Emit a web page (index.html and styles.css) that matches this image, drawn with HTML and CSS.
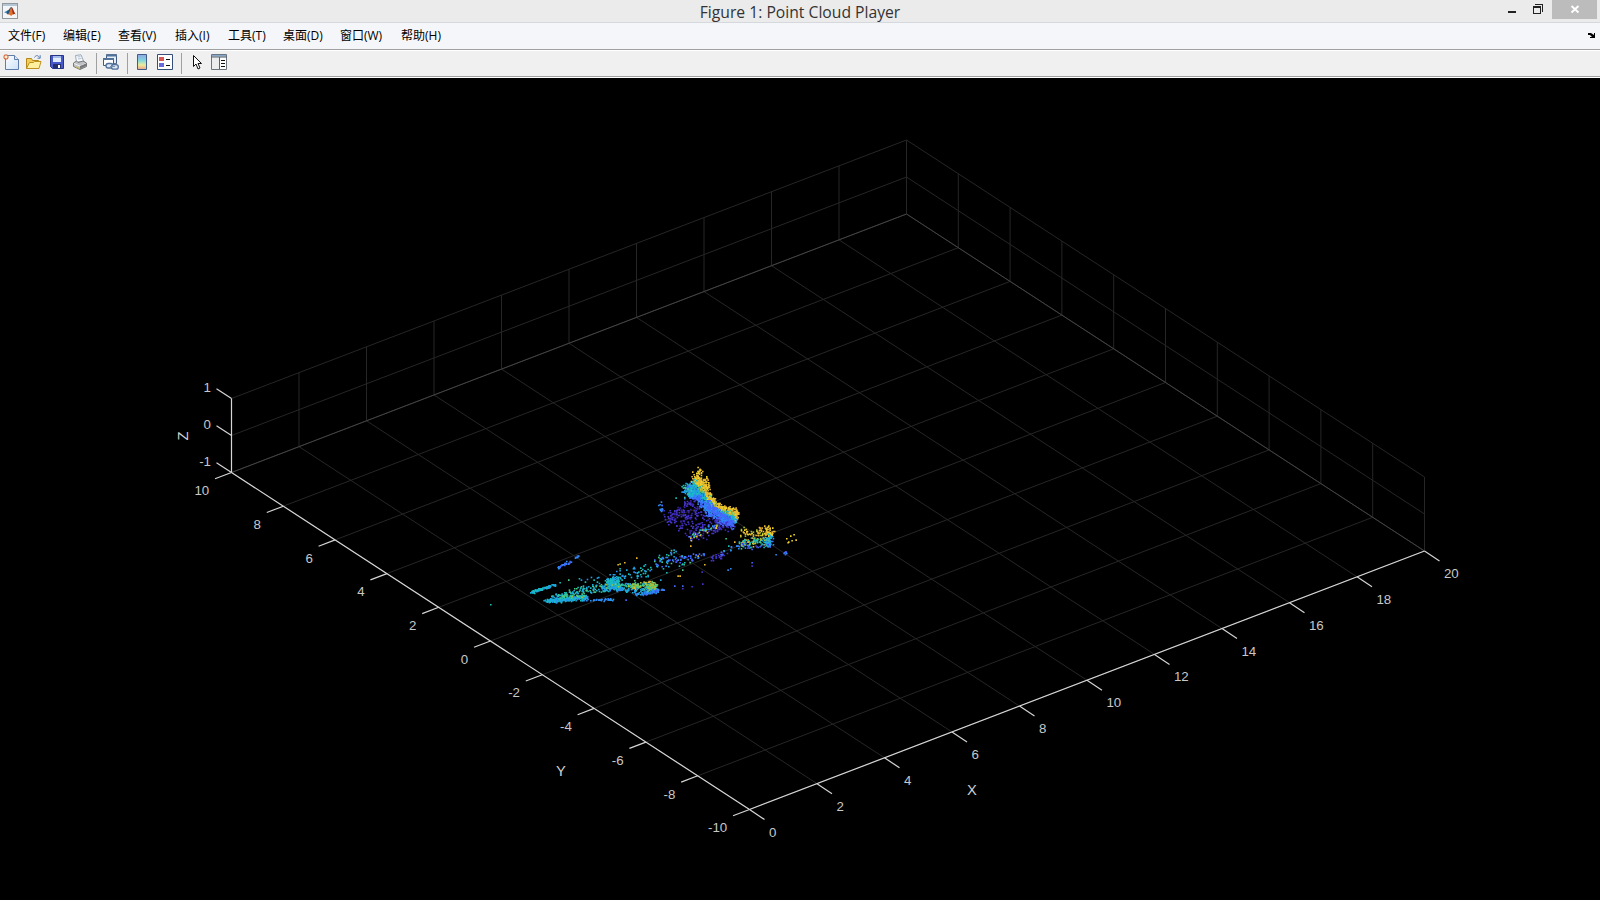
FILE: index.html
```html
<!DOCTYPE html>
<html lang="zh-CN">
<head>
<meta charset="utf-8">
<title>Figure 1: Point Cloud Player</title>
<link rel="stylesheet" href="styles.css">
</head>
<body>
<div class="window">
  <header class="titlebar">
    <svg class="app-icon" width="16" height="16" viewBox="0 0 16 16">
      <rect x=".5" y=".5" width="15" height="15" fill="#f4f5f7" stroke="#8f989f"/>
      <path d="M1 1h14v2H1z" fill="#b4c5d3"/>
      <path d="M2 9.200 5.500 7.500 8 9 6 11.500 4.500 10.300z" fill="#4288b8"/>
      <path d="M5.500 7.500C7.500 7 8 4 9.300 4L8.500 8 6 11.500 4.500 10z" fill="#28587d"/>
      <path d="M9.300 4c1.200 0 2.500 5 4.400 7.400-2-1-3.200 0-4.500 1.700C8.500 12 7.500 11.500 6 11.500 8 9.500 8.500 5 9.300 4z" fill="#e4702b"/>
      <path d="M9.300 4c1.200 0 2.500 5 4.400 7.400-1.500-.7-2.200-.5-2.800 0C10.500 9 9.800 6 9.300 4z" fill="#9b2f1d"/>
    </svg>
    <h1 class="title">Figure 1: Point Cloud Player</h1>
    <div class="controls">
      <svg class="control" width="9" height="19"><path d="M0 11h8v2H0z" fill="#222"/></svg>
      <svg class="control restore" width="11" height="19"><path d="M2 4h8v8H9V5H2z" fill="#222"/><path d="M0 6h8v8H0zM1 8v5h6V8z" fill="#222" fill-rule="evenodd"/></svg>
      <svg class="close" width="45" height="19"><path d="M19.500 6l7 6.500m0-6.500-7 6.500" stroke="#fff" stroke-width="1.900"/></svg>
    </div>
  </header>
  <nav class="menubar">
    <span>文件(F)</span><span>编辑(E)</span><span>查看(V)</span><span>插入(I)</span><span>工具(T)</span><span>桌面(D)</span><span>窗口(W)</span><span>帮助(H)</span>
    <svg class="dock" width="8" height="7"><path d="M0 1h3l3 2V1h1v5H2V5h2L2 3H0z" fill="#000"/></svg>
  </nav>
  <div class="toolbar">
    <svg class="tool" width="16" height="16" viewBox="0 0 16 16">
      <defs><linearGradient id="paper" x2="1" y2="1"><stop stop-color="#fff"/><stop offset="1" stop-color="#cbe2f8"/></linearGradient></defs>
      <path d="M2.500 1.500h9l4 4v10h-13z" fill="url(#paper)" stroke="#5f7da8"/><path d="M11.500 1.500v4h4" fill="#dceafa" stroke="#5f7da8"/>
      <path d="M3 0v6M0 3h6M1 1l4 4m0-4L1 5" stroke="#d9673f" stroke-width="1.100"/><circle cx="3" cy="3" r="1.400" fill="#fff0c8"/>
    </svg>
    <svg class="tool" width="16" height="16" viewBox="0 0 16 16">
      <path d="M.5 14.500v-10h5l1 2h6v8z" fill="#f4cf58" stroke="#b38717"/>
      <path d="M.5 14.500 3.500 8.500h4l1-1h6.500l-2 7z" fill="#fff0a0" stroke="#bd9120"/>
      <path d="M8.500 3.500c1.500-3 4-2 5 0m.7-2.300v3H11.500" fill="none" stroke="#557cae"/>
    </svg>
    <svg class="tool" width="16" height="16" viewBox="0 0 16 16">
      <path d="M1.500 1.500h13v13h-11l-2-2z" fill="#4859cc" stroke="#263483"/><path d="M4 2h8v6H4z" fill="#e1ecfb"/><path d="M4 2h8v2H4z" fill="#a5bbe9"/><path d="M4 10h8v4H4z" fill="#252f69"/><path d="M9 11h2v3H9z" fill="#fff"/>
    </svg>
    <svg class="tool" width="16" height="16" viewBox="0 0 16 16">
      <path d="M4.500 8 3.500 1.500 9 .8l3 7.200z" fill="#f8fbff" stroke="#9aa8b8"/><path d="m5.500 3 3-.4M6 5l3.500-.5" stroke="#b0bed0"/>
      <path d="m1.500 9 3-2 1.500 1.500 5-1.500 3.500 2v3.500L8 15.500l-6.500-3z" fill="#bfc2c4" stroke="#777"/><path d="m2 9.500 6 2.500 6-2.500" fill="none" stroke="#f0f0f0"/><path d="m8 15 6-3V9.500L8 12z" fill="#77797c"/><path d="m4 13 3.500 1.500" stroke="#c8b64a"/>
    </svg>
    <i class="separator"></i>
    <svg class="tool" width="16" height="16" viewBox="0 0 16 16">
      <path d="M3.500.7h10v9h-10z" fill="#e4edf6" stroke="#405b80"/><path d="M3 .5h11v2H3z" fill="#527399"/><path d="M.5 4.500h10v7H.5z" fill="#fff" stroke="#405b80"/><path d="M0 4h11v2H0z" fill="#527399"/>
      <g fill="#dae6f4" stroke="#51719b" stroke-width="1.300"><rect x="3" y="9.500" width="7" height="4.500" rx="2.200"/><rect x="8.500" y="10.700" width="6.800" height="4.500" rx="2.200"/></g><path d="M7 12.500h5" stroke="#7892b2"/>
    </svg>
    <i class="separator"></i>
    <svg class="tool colorbar" width="12" height="16" viewBox="0 0 12 16">
      <defs><linearGradient id="bar" x2="0" y2="1"><stop stop-color="#91a6e5"/><stop offset=".4" stop-color="#83d7dc"/><stop offset=".7" stop-color="#ecec9b"/><stop offset="1" stop-color="#ee9f88"/></linearGradient></defs>
      <path d="M1.500.5h9v15h-9z" fill="url(#bar)" stroke="#405d8a"/>
    </svg>
    <svg class="tool" width="16" height="16" viewBox="0 0 16 16">
      <path d="M.5.500h15v15H.5z" fill="#fff" stroke="#344f78"/><path d="M2 3h5v4H2z" fill="#d95757"/><path d="M2 9h5v4H2z" fill="#6868df"/><path d="M9 5.500h4M9 11.500h4" stroke="#111"/>
    </svg>
    <i class="separator"></i>
    <svg class="tool arrow" width="11" height="16" viewBox="0 0 11 16"><path d="M1.500 1.500v11l2.500-2.500L6 15l2-1-2-4.500h3.500z" fill="#fff" stroke="#111"/></svg>
    <svg class="tool" width="16" height="16" viewBox="0 0 16 16">
      <path d="M.5.500h15v15H.5z" fill="#ececec" stroke="#6c747d"/><path d="M1 1h14v1.500H1z" fill="#84a8cd"/><path d="M0 3h16M8.500 3v12" stroke="#59626d"/><path d="M9 4h6v11H9z" fill="#fff"/><path d="M10 6.500h4M10 9.500h4M10 12.500h4" stroke="#111"/>
    </svg>
  </div>
  <main class="figure"><svg id="plot" class="plot" width="1600" height="822" viewBox="0 78 1600 822"></svg></main>
</div>
<script src="plot.js"></script>
</body>
</html>
```
FILE: styles.css
```css
* { box-sizing: border-box; }
body { margin: 0; background: #000; overflow: hidden; }
.window { display: flex; flex-direction: column; width: 1600px; height: 900px; }
.titlebar { display: grid; grid-template-columns: 120px 1fr 120px; height: 23px; background: #ebebeb; border-bottom: 1px solid #d5d9dd; }
.app-icon { margin: 3px 0 0 2px; }
.title { margin: 0; font: 400 15.7px/24px "Open Sans", "Noto Sans", sans-serif; color: #333; text-align: center; white-space: nowrap; }
.controls { display: flex; justify-content: flex-end; padding-right: 3px; }
.control { flex: 0 0 auto; margin-right: 16px; }
.control.restore { margin-right: 8px; }
.close { flex: 0 0 45px; background: #bcbcbc; }
.menubar { display: grid; grid-template-columns: 55px 55px 57px 53px 55px 57px 61px 1fr 8px; height: 28px; padding: 0 4px 0 8px; background: #f4f6f9; border-bottom: 1px solid #fff; box-shadow: inset 0 -1px #a0a0a0; font: 12px/25px "Open Sans", "Noto Sans CJK SC", sans-serif; color: #000; white-space: nowrap; }
.dock { margin-top: 9px; }
.toolbar { display: flex; align-items: flex-start; height: 27px; padding: 3px 0 0 3px; background: #f0f0f0; border-bottom: 1px solid #fff; box-shadow: inset 0 -1px #a0a0a0; }
.tool { flex: 0 0 auto; margin-right: 7px; }
.separator { width: 1px; height: 21px; margin: -1px 6px 0 1px; background: #a0a0a0; }
.tool.colorbar { margin: 0 9px 0 2px; }
.tool.arrow { margin: 0 8px 0 4px; }
.figure { height: 822px; background: #000; }
.plot { display: block; }
.tick-label { font: 13.300px "Liberation Sans", Arial, sans-serif; fill: #c8c8c8; }
.axis-label { font: 14.700px "Liberation Sans", Arial, sans-serif; fill: #d0d0d0; text-anchor: middle; }
.end { text-anchor: end; }
.grid { stroke: #262626; stroke-width: 1; fill: none; }
.edge { stroke: #434343; stroke-width: 1; fill: none; }
.axis { stroke: #d6d6d6; stroke-width: 1.200; fill: none; }
```
FILE: plot.js
```js
const plot = document.getElementById('plot');
const NS = 'http://www.w3.org/2000/svg';
function add(tag, attrs, text) {
  const el = document.createElementNS(NS, tag);
  for (const k in attrs) el.setAttribute(k, attrs[k]);
  if (text !== undefined) el.textContent = text;
  plot.appendChild(el);
}
// Axonometric projection of data coordinates
function project(x, y, z) {
  return [231.5 + x * 33.75 + (10 - y) * 25.9, 472.5 - x * 12.925 + (10 - y) * 16.85 - (z + 1) * 37];
}
function line(a, b, cls) {
  add('path', { class: cls, d: 'M' + a.join(' ') + 'L' + b.join(' ') });
}
for (let i = 0; i <= 10; i++) {
  const x = i * 2, y = i * 2 - 10;
  line(project(x, -10, -1), project(x, 10, -1), 'grid');
  line(project(0, y, -1), project(20, y, -1), 'grid');
  if (i > 0) line(project(x, 10, -1), project(x, 10, 1), 'grid');
  line(project(20, y, -1), project(20, y, 1), 'grid');
}
for (const z of [0, 1]) {
  line(project(0, 10, z), project(20, 10, z), 'grid');
  line(project(20, 10, z), project(20, -10, z), 'grid');
}
line(project(0, 10, -1), project(20, 10, -1), 'edge');
line(project(20, 10, -1), project(20, -10, -1), 'edge');
line(project(0, 10, -1), project(0, -10, -1), 'axis');
line(project(0, -10, -1), project(20, -10, -1), 'axis');
line(project(0, 10, -1), project(0, 10, 1), 'axis');
for (let i = 0; i <= 10; i++) {
  let p = project(i * 2, -10, -1);
  line(p, [p[0] + 15, p[1] + 10], 'axis');
  add('text', { class: 'tick-label', x: p[0] + 19.4, y: p[1] + 27 }, i * 2);
  p = project(0, i * 2 - 10, -1);
  line(p, [p[0] - 16.5, p[1] + 6.3], 'axis');
  add('text', { class: 'tick-label end', x: p[0] - 22.3, y: p[1] + 22.7 }, i * 2 - 10);
}
for (const z of [-1, 0, 1]) {
  const p = project(0, 10, z);
  line(p, [p[0] - 15, p[1] - 9.7], 'axis');
  add('text', { class: 'tick-label end', x: p[0] - 20.5, y: p[1] - 6.3 }, z);
}
add('text', { class: 'axis-label', x: 972, y: 795 }, 'X');
add('text', { class: 'axis-label', x: 560.8, y: 776 }, 'Y');
add('text', { class: 'axis-label', transform: 'translate(187.5 436) rotate(-90)' }, 'Z');

// Point cloud
const C = ['#35209a', '#4534c8', '#4367fd', '#2d8cf3', '#1caadf', '#18bfb9', '#48cb86', '#a8be32', '#e8b632', '#ecd22c'];
let seed = 91237;
function rnd() { seed = (seed * 1664525 + 1013904223) % 4294967296; return seed / 4294967296; }
function gauss() { return (rnd() + rnd() + rnd() - 1.5) / 1.1; }
const dots = [];
function dot(x, y, c) {
  c = Math.max(0, Math.min(9, Math.round(c)));
  dots.push([Math.round(x * 1.5) / 1.5, Math.round(y * 1.5) / 1.5, c]);
}
function along(pts, t) {
  const s = Math.min(t, .9999) * (pts.length - 1), i = Math.floor(s), f = s - i;
  return [pts[i][0] + (pts[i + 1][0] - pts[i][0]) * f, pts[i][1] + (pts[i + 1][1] - pts[i][1]) * f];
}
function strip(upper, lower, n, color, jitter) {
  for (let i = 0; i < n; i++) {
    const t = rnd(), v = rnd(), a = along(upper, t), b = along(lower, t);
    dot(a[0] + (b[0] - a[0]) * v + gauss() * jitter, a[1] + (b[1] - a[1]) * v + gauss() * jitter, color(v, t));
  }
}
function trail(x1, y1, x2, y2, spread, n, lo, hi) {
  for (let i = 0; i < n; i++) {
    const t = rnd();
    dot(x1 + (x2 - x1) * t + gauss(), y1 + (y2 - y1) * t + gauss() * spread, lo + rnd() * (hi - lo));
  }
}
function blob(x, y, rx, ry, n, lo, hi) {
  for (let i = 0; i < n; i++) dot(x + gauss() * rx, y + gauss() * ry, lo + rnd() * (hi - lo));
}
// Sparse low returns behind the wall
strip([[681, 503], [691, 501], [700, 503], [712, 514], [731, 522]], [[662, 517], [679, 529], [692, 538], [706, 536], [729, 526]], 290, () => rnd() * 1.5, 5);
blob(672, 517, 11, 8, 28, 0, 1.4);
blob(661, 507, 4, 5, 14, 2, 3.4);
trail(694, 534, 718, 525, 3.5, 36, 1, 9);
trail(686, 540, 697, 534, 5, 12, 0, 9);
// Curved wall, coloured by height
strip([[696, 477], [707, 483], [706, 489], [712, 498], [719, 505], [729, 507], [736, 509], [737, 516]],
      [[686, 488], [687, 496], [695, 499], [704, 507], [709, 514], [716, 519], [724, 524], [733, 522]],
      1150, v => { const u = v + gauss() * .08; return u < .24 ? 8 + rnd() : u < .38 ? 6 + rnd() * 2 : u < .58 ? 3.5 + rnd() * 2 : 1.8 + rnd() * 1.4; }, 2.6);
blob(697, 476, 6, 9, 55, 7.6, 9);
blob(705, 482, 5, 6, 30, 7.6, 9);
blob(690, 489, 8, 9, 100, 3, 6);
trail(706, 502, 733, 524, 5, 130, 1.6, 2.7);
trail(715, 520, 734, 526, 4, 30, 1, 2);
// Right-hand group
blob(755, 532, 17, 7, 62, 7, 9);
blob(768, 531, 5, 6, 38, 8, 9);
trail(739, 544, 770, 538, 5, 105, 4, 8);
blob(768, 541, 5, 8, 45, 2, 5);
trail(740, 546, 772, 544, 4, 18, 1, 3);
for (const [x, y] of [[786, 538], [790, 535], [793, 534], [795, 539], [788, 541], [791, 540], [787, 542]]) dot(x, y, 9);
trail(782, 554, 786, 551, 3, 7, 2, 3);
trail(654, 563, 704, 554, 4.5, 56, 1.3, 3);
trail(708, 559, 727, 553, 5, 25, .5, 1.5);
trail(720, 553, 744, 542, 4, 18, 2, 5);
trail(654, 560, 676, 550, 5, 17, 2, 7);
// Ground returns
trail(530, 592, 555, 584, 1.6, 85, 3.4, 5);
trail(557, 567, 570, 561, 1.8, 26, 2, 3.3);
trail(574, 558, 578, 555, 1.5, 8, 2, 3);
strip([[551, 595], [565, 592], [578, 587], [592, 585], [609, 580]], [[552, 596], [570, 594], [585, 592], [601, 592], [617, 589]], 120, () => 3.6 + rnd() * 3, 1.8);
trail(548, 600, 587, 597, 2.8, 220, 3, 5);
trail(542, 601, 552, 599, 1.8, 22, 3.6, 5);
trail(560, 597, 583, 595, 1.5, 26, 5, 7);
blob(613, 582, 8, 6, 120, 3.6, 5.4);
strip([[600, 585], [616, 584], [634, 584], [650, 582], [657, 586]], [[603, 590], [616, 590], [629, 591], [645, 591], [657, 591]], 220, v => v < .35 ? 4 + rnd() * 3 : 3 + rnd() * 1.8, 1.8);
blob(634, 585, 8, 3.5, 42, 5.5, 8);
blob(651, 585, 7, 5, 60, 5.5, 8);
trail(635, 594, 658, 590, 1.8, 50, 2.4, 4);
trail(586, 599, 612, 599, 1.2, 30, 2.6, 3.6);
trail(640, 595, 664, 588, 1.5, 20, 2, 3);
trail(610, 578, 650, 571, 9, 55, 3, 5.5);
trail(578, 579, 600, 578, 3, 9, 3, 5);
trail(635, 574, 685, 560, 11, 28, 3, 6);
for (const [x, y, c] of [[490,604,5],[617,564,8],[619,563,7],[624,562,8],[636,557,8],[677,575,8],[679,575,8],[704,564,8],[727,569,3],[730,568,3],[751,562,2],[751,565,1],[674,585,2],[682,585,2],[682,588,1],[691,586,1],[702,583,1],[675,497,5],[725,538,6],[734,541,8],[690,545,8],[775,554,3],[568,579,6],[559,582,5],[625,599,2],[689,562,6],[697,555,8],[684,562,5],[701,571,1]]) dot(x, y, c);
// Neighbouring dots of one colour share a path, so draw order follows the scan order
let run = '', current = -1;
function flush() { if (run) add('path', { d: run, fill: C[current] }); run = ''; }
for (const [x, y, c] of dots) {
  if (c !== current) { flush(); current = c; }
  run += 'M' + x.toFixed(2) + ' ' + y.toFixed(2) + 'h1.6v1.6h-1.6z';
}
flush();
```
